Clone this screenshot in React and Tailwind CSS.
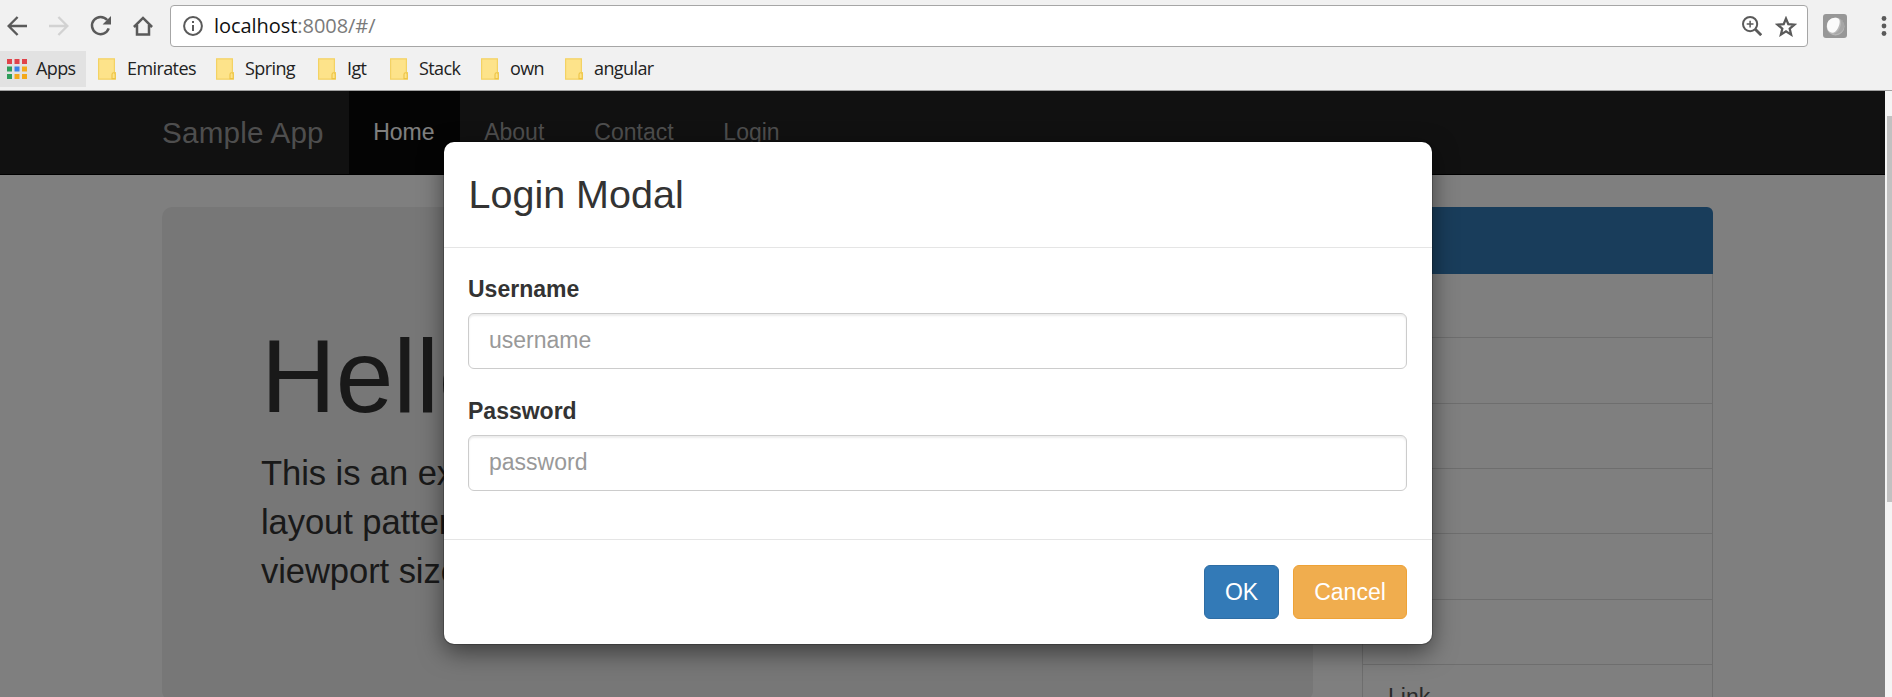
import React from 'react';

const folders = [
  { name: 'Emirates', cls: 'w-[118px]' },
  { name: 'Spring', cls: 'w-[102px]' },
  { name: 'Igt', cls: 'w-[72px]' },
  { name: 'Stack', cls: 'w-[91px]' },
  { name: 'own', cls: 'w-[84px]' },
  { name: 'angular', cls: 'w-[100px]' },
];

function Back({ className }) {
  return (
    <svg width="20" height="20" viewBox="0 0 20 20" className={className} fill="none" stroke="currentColor" strokeWidth="2.4">
      <path d="M20 10H2.2M10.6 1L1.6 10l9 9" />
    </svg>
  );
}

function Refresh() {
  return (
    <svg width="22" height="22" viewBox="0 0 22 22" className="text-[#5a5a5a]">
      <path d="M17.2 5A8.6 8.6 0 1 0 18.7 13.4" fill="none" stroke="currentColor" strokeWidth="2.5" />
      <path d="M21 1v8.4h-8.4z" fill="currentColor" />
    </svg>
  );
}

function Home() {
  return (
    <svg width="20" height="20" viewBox="0 0 20 20" className="text-[#5a5a5a]" fill="none" stroke="currentColor" strokeWidth="2.5">
      <path d="M.9 11L10 1.9 19.1 11M4 9v9.6h12V9" />
    </svg>
  );
}

function Info() {
  return (
    <svg width="20" height="20" viewBox="0 0 20 20" className="text-[#5a5a5a]">
      <circle cx="10" cy="10" r="8.9" fill="none" stroke="currentColor" strokeWidth="2" />
      <path d="M9 5h2v2.1H9zM9 9h2v6H9z" fill="currentColor" />
    </svg>
  );
}

function ZoomIn() {
  return (
    <svg width="20" height="20" viewBox="0 0 20 20" className="text-[#5a5a5a]" fill="none" stroke="currentColor">
      <circle cx="8.1" cy="8.1" r="7.1" strokeWidth="2" />
      <path d="M13 13l6.2 6.2" strokeWidth="2.8" />
      <path d="M4.7 8.1h6.8M8.1 4.7v6.8" strokeWidth="1.5" />
    </svg>
  );
}

function Star() {
  return (
    <svg width="22" height="21" viewBox="0 0 22 21" className="text-[#5a5a5a]" fill="none" stroke="currentColor" strokeWidth="2.3">
      <path d="M11 2.6l2.3 5.6 6 .5-4.6 4 1.4 5.9L11 15.4l-5.1 3.2 1.4-5.9-4.6-4 6-.5z" />
    </svg>
  );
}

function Extension() {
  return (
    <svg width="24" height="24" viewBox="0 0 24 24">
      <rect width="24" height="24" rx="3" fill="#979797" />
      <circle cx="12.5" cy="12.5" r="9" fill="#b8b8b8" />
      <path d="M17 5c3 5-1 14-7 15 6 1 11-3 11-8 0-3-1-6-4-7z" fill="#999" opacity=".6" />
      <path d="M4 12C4 6 9 3 14 4c4 1 3 6 1 10-2 4-5 6-8 4-2-1-3-3-3-6z" fill="#fbfbfb" />
    </svg>
  );
}

function AppsGrid() {
  const colors = ['#e0434a', '#e0434a', '#e0434a', '#2f9e5b', '#3b82e6', '#f4a91a', '#2f9e5b', '#f4a91a', '#f4a91a'];
  return (
    <svg width="20" height="20" viewBox="0 0 20 20">
      {colors.map((c, i) => (
        <rect key={i} x={(i % 3) * 7.5} y={Math.floor(i / 3) * 7.5} width="5" height="5" fill={c} />
      ))}
    </svg>
  );
}

function Folder() {
  return (
    <svg width="18" height="22" viewBox="0 0 18 22" className="shrink-0">
      <path d="M.6 .8h15.8v13.8h1v6.6H.6z" fill="#fde38a" stroke="#f3d264" strokeWidth="1.2" />
      <path d="M14 20.6v-4.2q0-1.6 1.6-1.6t1.6 1.6v4.2z" fill="#fde38a" stroke="#edc445" strokeWidth="1.1" />
    </svg>
  );
}

function Field({ label, type, placeholder, className }) {
  return (
    <div className={className}>
      <label className="block h-[33px] pt-px text-[23px] leading-[33px] font-bold">{label}</label>
      <input
        type={type}
        placeholder={placeholder}
        className="mt-2 block h-14 w-full rounded-[6px] border border-[#ccc] px-5 pb-px text-[23px] shadow-[inset_0_2px_2px_rgba(0,0,0,0.075)] placeholder:text-[#999] placeholder:opacity-100"
      />
    </div>
  );
}

function BrowserChrome() {
  return (
    <header className="flex h-[91px] flex-col border-b border-[#a0a0a0] bg-[#f1f1f1] font-['Open_Sans',sans-serif]">
      <div className="flex h-[51px] items-start pt-[5px]">
        <div className="flex h-[42px] w-[170px] items-center pl-[7px]">
          <Back className="text-[#5a5a5a]" />
          <Back className="ml-[22px] rotate-180 text-[#d2d2d2]" />
          <span className="ml-[21px]"><Refresh /></span>
          <span className="ml-[21px]"><Home /></span>
        </div>
        <div className="flex h-[42px] w-[1638px] items-center rounded-[4px] border border-[#a6a6a6] bg-white pl-3">
          <Info />
          <span className="ml-[11px] grow text-[20px] tracking-[-0.05px] text-[#7a7a7a]">
            <span className="text-[#111]">localhost</span>:8008/#/
          </span>
          <ZoomIn />
          <span className="mr-[10px] ml-[13px]"><Star /></span>
        </div>
        <div className="flex h-[42px] items-center pl-[15px]">
          <Extension />
          <svg width="6" height="20" viewBox="0 0 6 20" className="ml-[34px] text-[#5a5a5a]">
            <circle cx="3" cy="2.5" r="2.4" fill="currentColor" />
            <circle cx="3" cy="10" r="2.4" fill="currentColor" />
            <circle cx="3" cy="17.5" r="2.4" fill="currentColor" />
          </svg>
        </div>
      </div>
      <nav className="flex h-9 items-center text-[18px] tracking-[-0.6px] text-[#222]">
        <div className="mr-3 flex h-full w-[86px] items-center bg-[#e2e2e2] pl-[7px]">
          <AppsGrid />
          <span className="ml-[9px] pb-px">Apps</span>
        </div>
        {folders.map((f) => (
          <div key={f.name} className={'flex items-center gap-[11px] ' + f.cls}>
            <Folder />
            <span className="pb-px">{f.name}</span>
          </div>
        ))}
      </nav>
    </header>
  );
}

function Page() {
  return (
    <div className="h-full w-[1885px] bg-white">
      <nav className="flex h-[84px] items-stretch border-b border-black bg-[#222] pl-[162px] text-[23px] leading-[83px] text-[#9d9d9d]">
        <span className="w-[187px] text-[29.6px] tracking-[0.22px]">Sample App</span>
        <span className="w-[111px] bg-[#080808] pl-[24.2px] text-white">Home</span>
        <span className="pl-[24.2px]">About</span>
        <span className="pl-[50px]">Contact</span>
        <span className="pl-[49.8px]">Login</span>
      </nav>
      <main className="flex items-start gap-[49px] pt-8 pl-[162px]">
        <section className="h-[494px] w-[1151px] overflow-hidden rounded-[10px] bg-[#eee] pt-[112px] pl-[99px] whitespace-nowrap text-[#333]">
          <h1 className="text-[103.7px] leading-[114px] tracking-[-0.2px]">Hello, world!</h1>
          <p className="mt-4 text-[34.6px] leading-[48.8px] tracking-[-0.08px]">
            This is an example to show the potential of an offcanvas
            <br />
            layout pattern in Bootstrap. Try some responsive-range
            <br />
            viewport sizes to see it in action.
          </p>
        </section>
        <aside className="w-[351px] overflow-hidden rounded-t-[6px] text-[23px] leading-[64px] text-[#555]">
          <div className="h-[67px] bg-[#337ab7]" />
          <div className="h-16 border-x border-b border-[#ddd]" />
          <div className="h-[66px] border-x border-b border-[#ddd]" />
          <div className="h-[65px] border-x border-b border-[#ddd]" />
          <div className="h-[65px] border-x border-b border-[#ddd]" />
          <div className="h-[66px] border-x border-b border-[#ddd]" />
          <div className="h-[65px] border-x border-b border-[#ddd]" />
          <div className="h-[66px] border-x border-b border-[#ddd] pl-[25px]">Link</div>
        </aside>
      </main>
    </div>
  );
}

function LoginModal() {
  return (
    <div className="absolute inset-y-0 left-0 w-[1885px] bg-black/50 pt-[51px] pl-[444px]">
      <div className="flex h-[502px] w-[988px] flex-col rounded-[10px] bg-white text-[#333] shadow-[0_8px_25px_rgba(0,0,0,0.5),0_0_0_1px_rgba(0,0,0,0.2)]">
        <div className="h-[106px] border-b border-[#e5e5e5] px-[24.5px] text-[39.5px] leading-[105px]">Login Modal</div>
        <div className="grow pt-6 pr-[25px] pl-6">
          <Field label="Username" type="text" placeholder="username" />
          <Field label="Password" type="password" placeholder="password" className="mt-[25px]" />
        </div>
        <div className="flex h-[105px] items-start justify-end gap-[14px] border-t border-[#e5e5e5] px-[25px] pt-[25px] text-[23px] text-white">
          <button className="h-[54px] w-[75px] rounded-[6px] border border-[#2e6da4] bg-[#337ab7]">OK</button>
          <button className="h-[54px] w-[114px] rounded-[6px] border border-[#eea236] bg-[#f0ad4e]">Cancel</button>
        </div>
      </div>
    </div>
  );
}

export default function App() {
  return (
    <div className="flex h-[697px] w-[1892px] flex-col overflow-hidden font-['Liberation_Sans',Arial,sans-serif]">
      <BrowserChrome />
      <div className="relative flex h-[606px] overflow-hidden">
        <Page />
        <div className="w-[7px] bg-[#f4f4f4] pt-[25px] pl-[2px]">
          <div className="h-[386px] bg-[#c1c1c1]" />
        </div>
        <LoginModal />
      </div>
    </div>
  );
}
